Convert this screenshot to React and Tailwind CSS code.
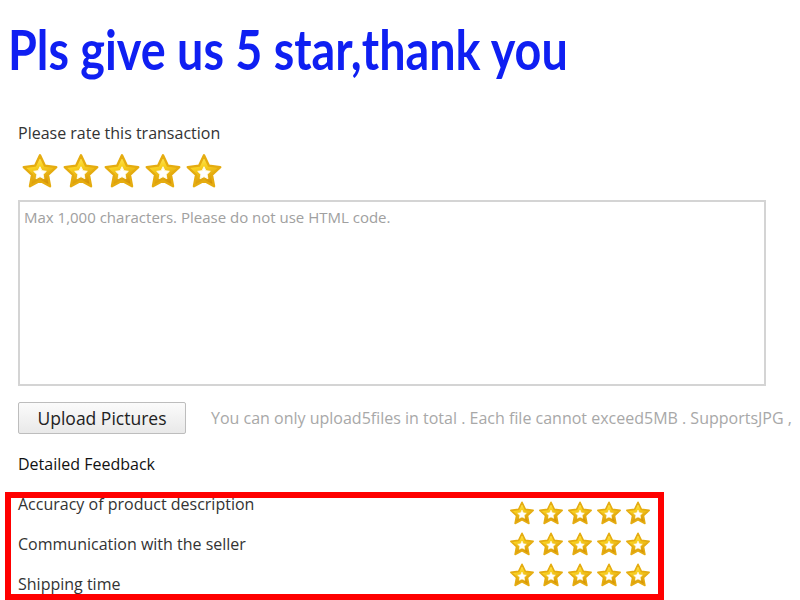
import React from 'react'

// star outline: 5 outer points, chubby inner radius
function starPath(cx, cy, r1, r2) {
  const pts = []
  for (let i = 0; i < 10; i++) {
    const r = i % 2 === 0 ? r1 : r2
    const a = -Math.PI / 2 + (i * Math.PI) / 5
    pts.push(`${(cx + r * Math.cos(a)).toFixed(2)},${(cy + r * Math.sin(a)).toFixed(2)}`)
  }
  return 'M' + pts.join('L') + 'Z'
}

function Star({ size }) {
  return (
    <svg width={size} height={size} viewBox="0 0 40 40">
      <defs>
        <linearGradient id="starFill" x1="0" y1="0" x2="0.3" y2="1">
          <stop offset="0" stopColor="#fff27e" />
          <stop offset="0.45" stopColor="#f9d121" />
          <stop offset="1" stopColor="#d69306" />
        </linearGradient>
      </defs>
      <path d={starPath(20, 21.5, 18, 8.8)} fill="url(#starFill)" stroke="#e5ac10" strokeWidth="2.5" strokeLinejoin="round" />
      <path d={starPath(20, 22.5, 7, 3.5)} fill="#ffffff" stroke="#fffbe0" strokeWidth="1" strokeLinejoin="round" />
    </svg>
  )
}

function StarRow({ size, gap }) {
  return (
    <div className={`flex ${gap}`}>
      {[0, 1, 2, 3, 4].map((i) => (
        <Star key={i} size={size} />
      ))}
    </div>
  )
}

const rows = ['Accuracy of product description', 'Communication with the seller', 'Shipping time']

export default function App() {
  return (
    <div className="w-[800px] h-[600px] overflow-hidden bg-white text-[#333] font-['Open_Sans',sans-serif]">
      <h1 className="pl-[8px] pt-[17px] h-[90px] text-[#0f1ff2] font-bold text-[56px] leading-[64px] font-['Lato',sans-serif] whitespace-nowrap">
        <span className="inline-block origin-left scale-x-[0.834]">Pls give us 5 star,thank you</span>
      </h1>

      <div className="pl-[18px] mt-[33px] text-[16px] leading-[20px]">Please rate this transaction</div>
      <div className="pl-[21px] mt-[9px] h-[48px]">
        <StarRow size={38} gap="gap-[3px]" />
      </div>

      <div className="ml-[18px] w-[748px] h-[186px] border-2 border-[#d4d4d4] px-[4px] pt-[4px] text-[15px] text-[#a0a0a0]">
        Max 1,000 characters. Please do not use HTML code.
      </div>

      <div className="flex items-center mt-[16px] pl-[18px]">
        <button className="w-[168px] h-[32px] rounded-[2px] border border-[#bdbdbd] bg-gradient-to-b from-[#fbfbfb] to-[#e9e9e9] text-[17.5px] text-[#222]">
          Upload Pictures
        </button>
        <span className="ml-[25px] text-[16px] text-[#a8a8a8] whitespace-nowrap">
          You can only upload5files in total . Each file cannot exceed5MB . SupportsJPG ,
        </span>
      </div>

      <div className="pl-[18px] mt-[19px] text-[16px] leading-[22px] text-[#111]">Detailed Feedback</div>

      <div className="ml-[5px] mt-[17px] w-[659px] h-[108px] border-[6px] border-[#ff0000] overflow-hidden flex justify-between pl-[7px] pr-[7px]">
        <div className="flex flex-col mt-[-2px]">
          {rows.map((r) => (
            <div key={r} className="shrink-0 h-[40px] text-[16px] leading-[16px]">
              {r}
            </div>
          ))}
        </div>
        <div className="flex flex-col gap-[5px] mt-[2px]">
          {rows.map((r) => (
            <StarRow key={r} size={26} gap="gap-[3px]" />
          ))}
        </div>
      </div>
    </div>
  )
}
